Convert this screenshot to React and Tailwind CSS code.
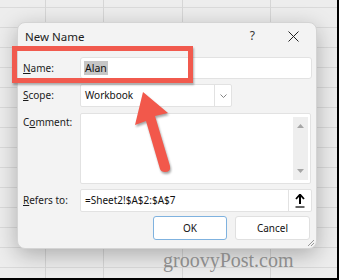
import React from "react";

const font = { fontFamily: '"Noto Sans", "Open Sans", sans-serif' };

function Label({ children }) {
  return <div className="w-[57px] shrink-0 text-[10px] text-[#1b1b1b]">{children}</div>;
}

function ArrowOverlay() {
  return (
    <svg
      className="absolute left-0 top-0 drop-shadow-[1px_2px_1px_rgba(0,0,0,0.35)]"
      width="339"
      height="280"
      viewBox="0 0 339 280"
    >
      <path
        d="M143 92 L168 113 L155 116 L170 166 Q171 172 165 172 Q161 172 160 169 L146 121 L135 125 Z"
        fill="#f2584b"
      />
    </svg>
  );
}

export default function App() {
  return (
    <div
      className="relative w-[339px] h-[280px] overflow-hidden border-r-2 border-b-2 border-black bg-[#ededed] bg-[linear-gradient(to_right,transparent_45px,#d6d6d6_45px,#d6d6d6_46px,transparent_46px,transparent_103px,#d6d6d6_103px,#d6d6d6_104px,transparent_104px,transparent_182px,#d6d6d6_182px,#d6d6d6_183px,transparent_183px,transparent_270px,#d6d6d6_270px,#d6d6d6_271px,transparent_271px),repeating-linear-gradient(to_bottom,transparent_0px,transparent_7px,#dadada_7px,#dadada_8px,transparent_8px,transparent_20px)] pl-[17px] pt-[22px]"
      style={font}
    >
      {/* dialog */}
      <div className="relative w-[300px] h-[227px] rounded-[8px] bg-[#f3f3f3] border border-[#d4d4d4] shadow-[0_6px_22px_rgba(0,0,0,0.28)]">
        <div className="flex h-[34px] items-start pl-[7px] pt-[5px] pr-[17px]">
          <span className="text-[11.5px] text-[#1b1b1b]">New Name</span>
          <span className="ml-auto mr-[33px] text-[12px] leading-[16px] text-[#333]">?</span>
          <svg width="11" height="11" viewBox="0 0 11 11" className="mt-[3px]">
            <path d="M0.5 0.5 L10.5 10.5 M10.5 0.5 L0.5 10.5" stroke="#222" strokeWidth="1" />
          </svg>
        </div>

        <div className="flex flex-col pl-[5px]">
          {/* Name */}
          <div className="flex h-[22px] items-center">
            <Label>
              <span className="underline">N</span>ame:
            </Label>
            <div className="flex h-[22px] w-[232px] items-center rounded-[3px] border border-[#e2e2e2] bg-white pl-[3px]">
              <span className="bg-[#c6c6c6] px-[1px] text-[10.5px] leading-[14px] text-[#111]">Alan</span>
            </div>
          </div>

          {/* Scope */}
          <div className="mt-[5px] flex h-[23px] items-center">
            <Label>
              <span className="underline">S</span>cope:
            </Label>
            <div className="flex h-[23px] w-[152px] rounded-[2px] border border-[#e2e2e2] bg-white">
              <div className="flex flex-1 items-center pl-[4px] text-[10px] text-[#111]">Workbook</div>
              <div className="flex w-[17px] items-center justify-center border-l border-[#e2e2e2]">
                <svg width="7" height="4" viewBox="0 0 7 4">
                  <path d="M0.5 0.5 L3.5 3.5 L6.5 0.5" fill="none" stroke="#777" strokeWidth="0.9" />
                </svg>
              </div>
            </div>
          </div>

          {/* Comment */}
          <div className="mt-[6px] flex h-[71px] items-start">
            <div className="pt-[2px]">
              <Label>
                C<span className="underline">o</span>mment:
              </Label>
            </div>
            <div className="flex h-[71px] w-[231px] justify-end rounded-[2px] border border-[#e2e2e2] bg-white py-[3px] pr-[2px]">
              <div className="flex w-[15px] flex-col items-center justify-between bg-[#eeeeee] py-[7px]">
                <svg width="7" height="4" viewBox="0 0 7 4">
                  <path d="M0 4 L3.5 0 L7 4 Z" fill="#a6a6a6" />
                </svg>
                <svg width="7" height="4" viewBox="0 0 7 4">
                  <path d="M0 0 L3.5 4 L7 0 Z" fill="#a6a6a6" />
                </svg>
              </div>
            </div>
          </div>

          {/* Refers to */}
          <div className="mt-[5px] flex h-[23px] items-center">
            <Label>
              <span className="underline">R</span>efers to:
            </Label>
            <div className="flex h-[23px] w-[232px] rounded-[2px] border border-[#e2e2e2] bg-white">
              <div className="flex flex-1 items-center pl-[4px] text-[10px] text-[#111]">=Sheet2!$A$2:$A$7</div>
              <div className="flex w-[23px] items-center justify-center border-l border-[#e2e2e2]">
                <svg width="10" height="14" viewBox="0 0 10 14">
                  <path d="M5 1 L5 10" stroke="#000" strokeWidth="2" />
                  <path d="M1 5 L5 0.5 L9 5" fill="none" stroke="#000" strokeWidth="1.8" />
                  <path d="M0.5 13 L9.5 13" stroke="#000" strokeWidth="1.2" />
                </svg>
              </div>
            </div>
          </div>

          {/* Buttons */}
          <div className="mt-[4px] flex h-[24px] justify-end gap-[8px] pr-[6px]">
            <button className="flex h-[24px] w-[74px] items-center justify-center rounded-[3px] border border-[#7fb2df] bg-white text-[10px] text-[#111]">
              OK
            </button>
            <button className="flex h-[24px] w-[75px] items-center justify-center rounded-[3px] border border-[#e0e0e0] bg-white text-[10px] text-[#111]">
              Cancel
            </button>
          </div>
        </div>

        {/* resize grip */}
        <svg className="absolute bottom-[1px] right-[1px]" width="8" height="8" viewBox="0 0 8 8">
          <path d="M7 1 L1 7 M7 4 L4 7" stroke="#9a9a9a" strokeWidth="1" />
        </svg>
      </div>

      {/* red highlight box */}
      <div className="absolute left-[12px] top-[46px] h-[37px] w-[181px] border-[5px] border-[#f15a4e] shadow-[1px_2px_2px_rgba(0,0,0,0.3)]" />

      <ArrowOverlay />

      {/* watermark */}
      <div
        className="absolute left-[163px] top-[248px] text-[20px] leading-[24px] text-[#8c8c8c]"
        style={{ fontFamily: '"Liberation Serif", serif' }}
      >
        groovyPost.com
      </div>
    </div>
  );
}
